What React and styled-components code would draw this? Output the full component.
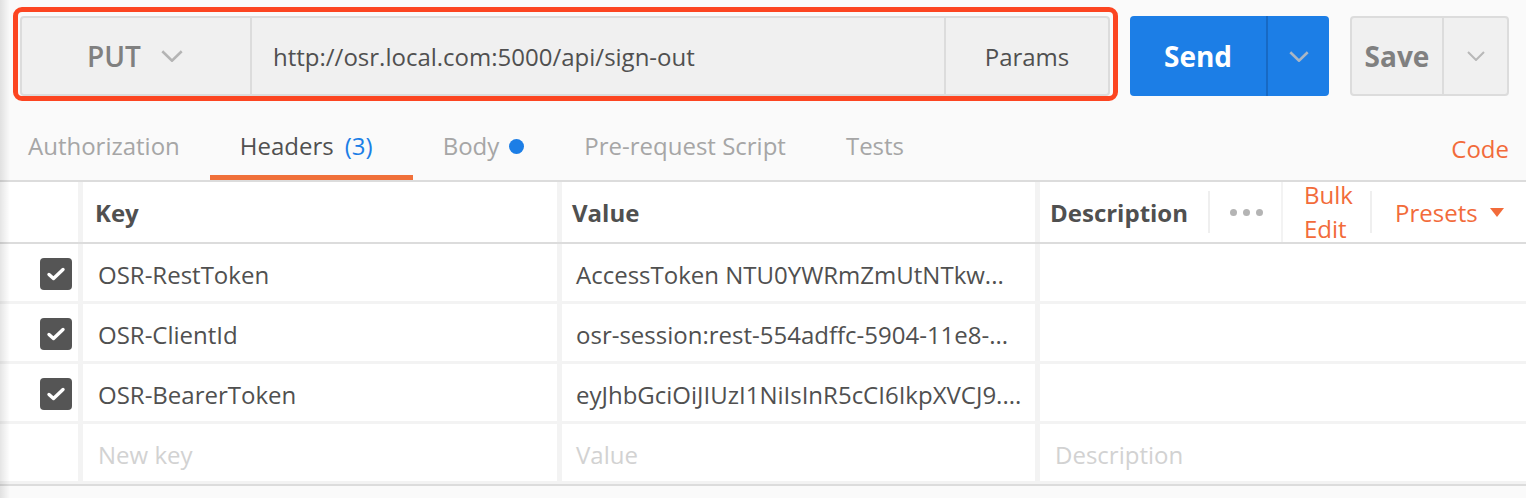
import React from 'react';
import styled, { createGlobalStyle } from 'styled-components';

const GlobalStyle = createGlobalStyle`
  html, body {
    margin: 0;
    padding: 0;
    background: #fafafa;
  }
  body {
    font-family: "Open Sans", "Liberation Sans", sans-serif;
    color: #505050;
  }
`;

const ORANGE = '#f26b3a';
const BLUE = '#1c7ee6';

const Page = styled.div`
  position: relative;
  width: 1526px;
  height: 498px;
  overflow: hidden;
  background: #fafafa;

  &::after {
    content: '';
    position: absolute;
    left: 0;
    top: 0;
    bottom: 0;
    width: 10px;
    background: linear-gradient(to right, rgba(0, 0, 0, 0.1), rgba(0, 0, 0, 0));
    pointer-events: none;
  }
`;

/* ---------- request bar ---------- */

const TopBar = styled.div`
  display: flex;
  align-items: flex-start;
  height: 101px;
  padding: 7px 0 0 13px;
  box-sizing: border-box;
`;

const Highlight = styled.div`
  width: 1105px;
  box-sizing: border-box;
  border: 5px solid #fc4521;
  border-radius: 9px;
  padding: 4px 3px 0 2px;
`;

const UrlBox = styled.div`
  display: flex;
  height: 80px;
  box-sizing: border-box;
  background: #f0f0f0;
  border: 2px solid #dcdcdc;
  border-radius: 4px;
`;

const MethodSelect = styled.div`
  width: 230px;
  flex: none;
  display: flex;
  align-items: center;
  justify-content: center;
  gap: 20px;
  padding-right: 2px;
  border-right: 2px solid #dcdcdc;
  box-sizing: border-box;
  font-size: 28px;
  font-weight: 600;
  color: #808080;
`;

const UrlText = styled.div`
  flex: 1;
  display: flex;
  align-items: center;
  padding-left: 21px;
  font-size: 24px;
  color: #505050;
`;

const ParamsButton = styled.div`
  width: 164px;
  flex: none;
  display: flex;
  align-items: center;
  justify-content: center;
  border-left: 2px solid #dcdcdc;
  box-sizing: border-box;
  font-size: 24px;
  color: #505050;
`;

const SplitButton = styled.div`
  display: flex;
  height: 80px;
  margin-top: 9px;
  margin-left: ${(p) => p.$gap}px;
  width: ${(p) => p.$width}px;
  box-sizing: border-box;
  border-radius: 4px;
  background: ${(p) => (p.$primary ? BLUE : '#f0f0f0')};
  border: ${(p) => (p.$primary ? 'none' : '2px solid #dcdcdc')};
`;

const SplitMain = styled.div`
  width: ${(p) => p.$width}px;
  flex: none;
  display: flex;
  align-items: center;
  justify-content: center;
  font-size: 28px;
  font-weight: 700;
  color: ${(p) => (p.$primary ? '#ffffff' : '#808080')};
  border-right: 2px solid ${(p) => (p.$primary ? '#1769c4' : '#dcdcdc')};
  box-sizing: border-box;
`;

const SplitCaret = styled.div`
  flex: 1;
  display: flex;
  align-items: center;
  justify-content: center;
`;

const Chevron = ({ w = 22, h = 12, color = '#b4b4b4', sw = 2.6 }) => (
  <svg width={w} height={h} viewBox={`0 0 ${w} ${h}`} fill="none">
    <path
      d={`M${sw / 2} ${sw / 2} L${w / 2} ${h - sw / 2} L${w - sw / 2} ${sw / 2}`}
      stroke={color}
      strokeWidth={sw}
    />
  </svg>
);

/* ---------- tabs ---------- */

const TabBar = styled.div`
  display: flex;
  align-items: flex-end;
  justify-content: space-between;
  height: 79px;
  padding-right: 17px;
`;

const TabList = styled.div`
  display: flex;
  margin-left: -2px;
`;

const Tab = styled.div`
  display: flex;
  align-items: center;
  gap: 10px;
  height: 60px;
  box-sizing: border-box;
  padding: 0 30px 5px;
  border-bottom: 5px solid ${(p) => (p.$active ? '#f0703a' : 'transparent')};
  font-size: 24px;
  color: ${(p) => (p.$active ? '#505050' : '#a6a6a6')};
  white-space: nowrap;
`;

const Count = styled.span`
  color: ${BLUE};
  margin-left: 1px;
  margin-right: 10px;
`;

const Dot = styled.span`
  width: 15px;
  height: 15px;
  border-radius: 50%;
  background: ${BLUE};
  margin-top: 3px;
`;

const CodeLink = styled.div`
  font-size: 24px;
  line-height: 33px;
  color: ${ORANGE};
  margin-bottom: 15px;
`;

/* ---------- table ---------- */

const Table = styled.div`
  border-top: 2px solid #dcdcdc;
`;

const Row = styled.div`
  display: grid;
  grid-template-columns: 78px 474px 473px 1fr;
  column-gap: 5px;
  background: #f3f3f3;
`;

const HeadRow = styled(Row)`
  height: 60px;
  border-bottom: 2px solid #dcdcdc;
`;

const Body = styled.div`
  display: grid;
  row-gap: 3px;
  padding-bottom: 3px;
  background: #f3f3f3;
  border-bottom: 2px solid #dcdcdc;
`;

const Cell = styled.div`
  display: flex;
  align-items: center;
  height: ${(p) => (p.$head ? 60 : 57)}px;
  padding-left: ${(p) => p.$pad || 0}px;
  padding-top: ${(p) => (p.$head ? 0 : 3)}px;
  box-sizing: border-box;
  background: #ffffff;
  font-size: 24px;
  font-weight: ${(p) => (p.$head ? 700 : 400)};
  color: ${(p) => (p.$placeholder ? '#d2d2d2' : '#505050')};
  white-space: nowrap;
  overflow: hidden;
`;

const HeadTail = styled.div`
  display: flex;
  height: 60px;
  background: #f3f3f3;
  gap: 2px;
`;

const DescHead = styled.div`
  width: 241px;
  display: flex;
  align-items: center;
  padding-left: 10px;
  box-sizing: border-box;
  background: #ffffff;
  font-size: 24px;
  font-weight: 700;
  color: #505050;
`;

const Divider = styled.span`
  width: 2px;
  height: 42px;
  flex: none;
  background: #efefef;
  margin: 0 ${(p) => p.$space ?? 20}px;
`;

const Dots = styled.span`
  display: flex;
  gap: 6px;
  & > i {
    width: 7px;
    height: 7px;
    border-radius: 50%;
    background: #b4b4b4;
  }
`;

const Actions = styled.div`
  flex: 1;
  display: flex;
  align-items: center;
  background: #ffffff;
  font-size: 24px;
  color: ${ORANGE};
`;

const BulkEdit = styled.div`
  width: 87px;
  padding-left: 21px;
  box-sizing: border-box;
  line-height: 34px;
`;

const Presets = styled.div`
  display: flex;
  align-items: center;
  gap: 12px;
  padding-left: 23px;
`;

const Checkbox = styled.span`
  width: 32px;
  height: 32px;
  flex: none;
  border-radius: 4px;
  background: #555555;
  display: flex;
  align-items: center;
  justify-content: center;
`;

const headers = [
  { key: 'OSR-RestToken', value: 'AccessToken NTU0YWRmZmUtNTkw...' },
  { key: 'OSR-ClientId', value: 'osr-session:rest-554adffc-5904-11e8-...' },
  { key: 'OSR-BearerToken', value: 'eyJhbGciOiJIUzI1NiIsInR5cCI6IkpXVCJ9....' },
];

const CheckMark = () => (
  <svg width="20" height="16" viewBox="0 0 20 16" fill="none">
    <path
      d="M3 8.5 L7.5 12.5 L17 3.5"
      stroke="#ffffff"
      strokeWidth="3.4"
      strokeLinecap="round"
      strokeLinejoin="round"
    />
  </svg>
);

export default function App() {
  return (
    <Page>
      <GlobalStyle />
      <TopBar>
        <Highlight>
          <UrlBox>
            <MethodSelect>
              PUT
              <Chevron />
            </MethodSelect>
            <UrlText>http://osr.local.com:5000/api/sign-out</UrlText>
            <ParamsButton>Params</ParamsButton>
          </UrlBox>
        </Highlight>
        <SplitButton $primary $gap={12} $width={199}>
          <SplitMain $primary $width={138}>Send</SplitMain>
          <SplitCaret>
            <Chevron w={20} h={11} color="#aab6c4" />
          </SplitCaret>
        </SplitButton>
        <SplitButton $gap={21} $width={159}>
          <SplitMain $width={92}>Save</SplitMain>
          <SplitCaret>
            <Chevron w={18} h={10} color="#b8b8b8" sw={2} />
          </SplitCaret>
        </SplitButton>
      </TopBar>

      <TabBar>
        <TabList>
          <Tab>Authorization</Tab>
          <Tab $active>
            Headers
            <Count>(3)</Count>
          </Tab>
          <Tab>
            Body
            <Dot />
          </Tab>
          <Tab>Pre-request Script</Tab>
          <Tab>Tests</Tab>
        </TabList>
        <CodeLink>Code</CodeLink>
      </TabBar>

      <Table>
        <HeadRow>
          <Cell $head />
          <Cell $head $pad={12}>Key</Cell>
          <Cell $head $pad={10}>Value</Cell>
          <HeadTail>
            <DescHead>
              Description
              <Divider />
              <Dots>
                <i />
                <i />
                <i />
              </Dots>
            </DescHead>
            <Actions>
              <BulkEdit>
                Bulk
                <br />
                Edit
              </BulkEdit>
              <Divider $space={0} />
              <Presets>
                Presets
                <svg width="14" height="9" viewBox="0 0 14 9">
                  <path d="M0 0 H14 L7 9 Z" fill={ORANGE} />
                </svg>
              </Presets>
            </Actions>
          </HeadTail>
        </HeadRow>

        <Body>
          {headers.map((h) => (
            <Row key={h.key}>
              <Cell $pad={40}>
                <Checkbox>
                  <CheckMark />
                </Checkbox>
              </Cell>
              <Cell $pad={15}>{h.key}</Cell>
              <Cell $pad={14}>{h.value}</Cell>
              <Cell />
            </Row>
          ))}
          <Row>
            <Cell />
            <Cell $pad={15} $placeholder>
              New key
            </Cell>
            <Cell $pad={14} $placeholder>
              Value
            </Cell>
            <Cell $pad={15} $placeholder>
              Description
            </Cell>
          </Row>
        </Body>
      </Table>
    </Page>
  );
}
